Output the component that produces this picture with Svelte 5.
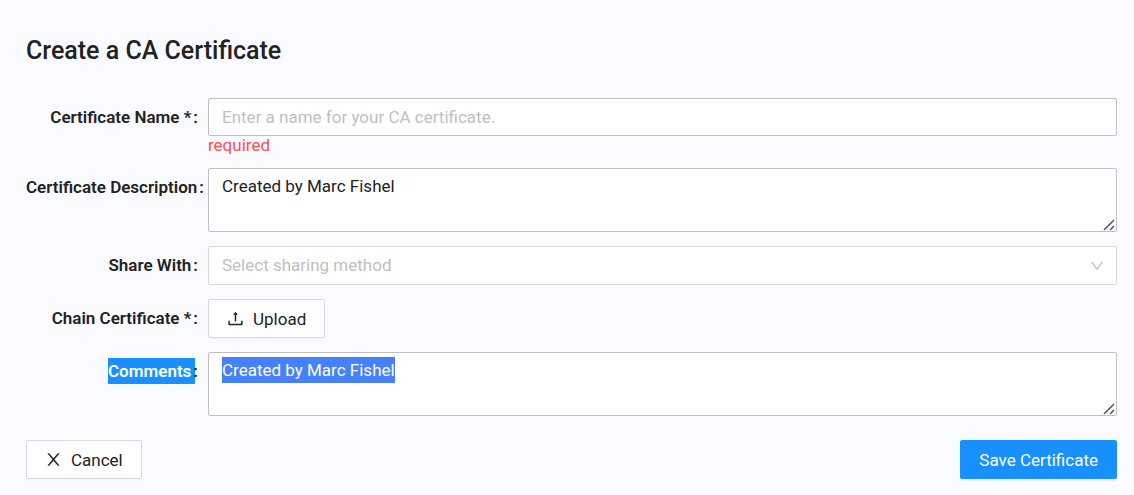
<script>
  import { onMount } from 'svelte';

  let name = $state('');
  let description = $state('Created by Marc Fishel');
  let comments = $state('Created by Marc Fishel');
  let share = $state('');
  let commentsBox;

  onMount(() => {
    commentsBox.focus();
    commentsBox.select();
  });
</script>

{#snippet grip()}
  <svg class="grip" width="12" height="12" viewBox="0 0 12 12" aria-hidden="true">
    <path d="M1 11 11 1M7 11l4-4" fill="none" stroke="#505050" stroke-width="1.5" />
  </svg>
{/snippet}

<main>
  <h1>Create a CA Certificate</h1>
  <form onsubmit={(e) => e.preventDefault()}>
    <div class="row first">
      <label for="name">Certificate Name *<span class="colon">:</span></label>
      <div class="field">
        <input id="name" class="box" type="text" placeholder="Enter a name for your CA certificate." bind:value={name} />
        <div class="error">required</div>
      </div>
    </div>

    <div class="row">
      <label for="description">Certificate Description<span class="colon">:</span></label>
      <div class="field">
        <textarea id="description" class="box" bind:value={description}></textarea>
        {@render grip()}
      </div>
    </div>

    <div class="row">
      <label for="share">Share With<span class="colon">:</span></label>
      <div class="field">
        <select id="share" class="box" class:empty={!share} bind:value={share}>
          <option value="" disabled hidden>Select sharing method</option>
        </select>
        <svg class="chevron" width="14" height="14" viewBox="64 64 896 896" fill="currentColor" aria-hidden="true">
          <path d="M884 256h-75c-5.100 0-9.900 2.500-12.900 6.600L512 654.200 227.900 262.600c-3-4.100-7.800-6.600-12.900-6.600h-75c-6.500 0-10.300 7.400-6.500 12.700l352.600 486.100c12.800 17.600 39 17.600 51.700 0l352.600-486.100c3.900-5.300.1-12.700-6.400-12.700z" />
        </svg>
      </div>
    </div>

    <div class="row">
      <label for="upload">Chain Certificate *<span class="colon">:</span></label>
      <div class="field">
        <button id="upload" class="btn" type="button">
          <svg width="17" height="17" viewBox="64 64 896 896" fill="currentColor" aria-hidden="true">
            <path d="M400 317.700h73.900V656c0 4.400 3.600 8 8 8h60c4.400 0 8-3.600 8-8V317.700H624c6.700 0 10.400-7.700 6.300-12.900L518.300 163a8 8 0 0 0-12.600 0l-112 141.700c-4.100 5.300-.4 13 6.300 13zM878 626h-60c-4.400 0-8 3.600-8 8v154H214V634c0-4.400-3.600-8-8-8h-60c-4.400 0-8 3.600-8 8v198c0 17.700 14.300 32 32 32h684c17.700 0 32-14.300 32-32V634c0-4.400-3.600-8-8-8z" />
          </svg>
          Upload
        </button>
      </div>
    </div>

    <div class="row">
      <label for="comments"><span class="marked">Comments</span><span class="colon">:</span></label>
      <div class="field">
        <textarea id="comments" class="box" bind:value={comments} bind:this={commentsBox}></textarea>
        {@render grip()}
      </div>
    </div>

    <div class="actions">
      <button class="btn" type="button">
        <svg width="17" height="17" viewBox="64 64 896 896" fill="currentColor" aria-hidden="true">
          <path d="M563.800 512l262.500-312.900c4.400-5.200.7-13.100-6.100-13.100h-79.800c-4.700 0-9.200 2.100-12.300 5.700L511.600 449.800 295.100 191.700c-3-3.600-7.500-5.700-12.300-5.700H203c-6.800 0-10.500 7.900-6.100 13.100L459.400 512 196.900 824.900A7.950 7.950 0 0 0 203 838h79.800c4.700 0 9.200-2.100 12.300-5.700l216.500-258.100 216.500 258.100c3 3.600 7.500 5.700 12.300 5.700h79.800c6.800 0 10.500-7.900 6.100-13.100L563.800 512z" />
        </svg>
        Cancel
      </button>
      <button class="btn primary" type="submit">Save Certificate</button>
    </div>
  </form>
</main>

<style>
  :global(body) {
    margin: 0;
    background: #fafbff;
  }
  main {
    padding: 33px 17px 16px 26px;
    color: #222;
    font: 17px/26px Roboto, sans-serif;
  }
  h1 {
    margin: 0 0 29px;
    font-size: 25px;
    line-height: 36px;
    font-weight: 500;
  }
  .row {
    display: grid;
    grid-template-columns: 172px 1fr;
    column-gap: 10px;
    margin-bottom: 14px;
  }
  label {
    padding-top: 6px;
    text-align: right;
    white-space: nowrap;
    font-weight: 600;
  }
  .colon {
    margin-left: 2px;
  }
  .marked {
    display: inline-block;
    margin-right: -4px;
    padding-right: 4px;
    background: #1890ff;
    color: #fff;
  }
  .marked + .colon {
    position: relative;
  }
  .field {
    position: relative;
    min-width: 0;
  }
  .box {
    display: block;
    box-sizing: border-box;
    width: 100%;
    margin: 0;
    padding: 5px 13px;
    border: 1px solid #bfbfbf;
    border-radius: 2px;
    background: #fff;
    color: inherit;
    font: inherit;
    outline: none;
  }
  input.box {
    height: 38px;
  }
  textarea.box {
    height: 64px;
    padding-top: 4px;
    resize: vertical;
  }
  textarea::-webkit-resizer {
    display: none;
  }
  textarea::selection {
    background: #4580ff;
    color: #fff;
  }
  input::placeholder {
    color: #bfbfbf;
    opacity: 1;
  }
  select.box {
    height: 39px;
    padding-top: 4px;
    padding-bottom: 6px;
    border-color: #d9d9d9;
    appearance: none;
  }
  select.empty {
    color: #bfbfbf;
    opacity: 1;
  }
  .chevron {
    position: absolute;
    top: 13px;
    right: 13px;
    color: #bfbfbf;
    pointer-events: none;
  }
  .grip {
    position: absolute;
    right: 2px;
    bottom: 1px;
    pointer-events: none;
  }
  .error {
    line-height: 18px;
    color: #ff4d4f;
  }
  .btn {
    display: inline-flex;
    align-items: center;
    gap: 9px;
    height: 39px;
    padding: 0 18px;
    border: 1px solid #d9d9d9;
    border-radius: 2px;
    background: #fff;
    box-shadow: 0 2px 0 rgba(0, 0, 0, 0.016);
    color: inherit;
    font: inherit;
  }
  .btn.primary {
    border-color: #1890ff;
    background: #1890ff;
    box-shadow: 0 2px 0 rgba(0, 0, 0, 0.045);
    color: #fff;
  }
  .field .btn {
    display: flex;
  }
  .actions {
    display: flex;
    justify-content: space-between;
    margin-top: 24px;
  }
</style>
